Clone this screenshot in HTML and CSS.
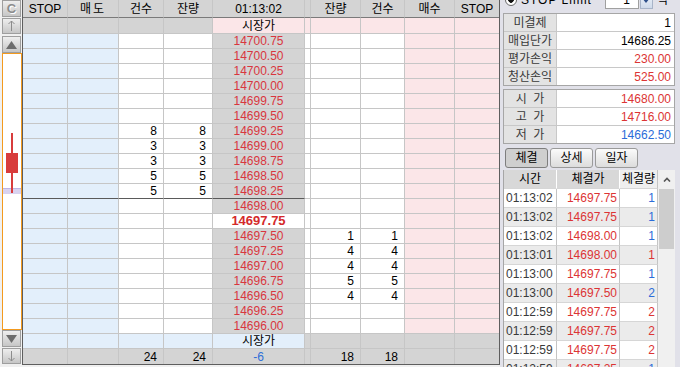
FILE: index.html
```html
<html>
  <head>
    <link rel="stylesheet" href="styles.css">
    <title>주문 호가</title>
  </head>
  <body>
    <div class="screen">
      <div class="side">
        <div class="side-btn letter">C</div>
        <div class="side-btn arrow">
          <svg width="9" height="12" viewBox="0 0 9 12"><path d="M4.5 1 V11 M1.5 4 L4.5 1 L7.5 4" fill="none" stroke="#8c8c8c" stroke-width="1"/></svg>
        </div>
        <div class="side-btn tri">
          <svg width="11" height="8" viewBox="0 0 11 8"><path d="M5.5 0 L11 8 H0 Z" fill="#6c6c6c"/></svg>
        </div>
        <div class="chart">
          <div class="range"></div>
          <div class="wick"></div>
          <div class="candle"></div>
        </div>
        <div class="side-btn tri">
          <svg width="11" height="8" viewBox="0 0 11 8"><path d="M0 0 H11 L5.5 8 Z" fill="#6c6c6c"/></svg>
        </div>
        <div class="side-btn arrow">
          <svg width="9" height="12" viewBox="0 0 9 12"><path d="M4.5 1 V11 M1.5 8 L4.5 11 L7.5 8" fill="none" stroke="#8c8c8c" stroke-width="1"/></svg>
        </div>
      </div>

      <div class="ladder" id="ladder">
        <div class="cell hd">STOP</div>
        <div class="cell hd wide">매도</div>
        <div class="cell hd">건수</div>
        <div class="cell hd">잔량</div>
        <div class="cell hd">01:13:02</div>
        <div class="cell hd"></div>
        <div class="cell hd">잔량</div>
        <div class="cell hd">건수</div>
        <div class="cell hd">매수</div>
        <div class="cell hd">STOP</div>
      </div>

      <div class="panel">
        <div class="opt">
          <div class="opt-row">
            <span class="radio"></span>
            <span class="opt-label">STOP Limit</span>
            <span class="spin">
              <span class="spin-val">1</span>
              <span class="spin-btn">
                <svg width="8" height="5" viewBox="0 0 8 5"><path d="M0 0 H8 L4 5 Z" fill="#2d4f8a"/></svg>
              </span>
            </span>
            <span class="tick">틱</span>
          </div>
        </div>

        <div class="info">
          <div class="info-row"><div class="info-key">미결제</div><div class="info-val">1</div></div>
          <div class="info-row"><div class="info-key">매입단가</div><div class="info-val">14686.25</div></div>
          <div class="info-row"><div class="info-key">평가손익</div><div class="info-val up">230.00</div></div>
          <div class="info-row"><div class="info-key">청산손익</div><div class="info-val up">525.00</div></div>
        </div>

        <div class="info second">
          <div class="info-row"><div class="info-key">시&nbsp;&nbsp;가</div><div class="info-val up">14680.00</div></div>
          <div class="info-row"><div class="info-key">고&nbsp;&nbsp;가</div><div class="info-val up">14716.00</div></div>
          <div class="info-row"><div class="info-key">저&nbsp;&nbsp;가</div><div class="info-val down">14662.50</div></div>
        </div>

        <div class="tabs">
          <div class="tab on">체결</div>
          <div class="tab">상세</div>
          <div class="tab">일자</div>
        </div>

        <div class="trades">
          <div class="trade-list" id="trade-list">
            <div class="tc th">시간</div>
            <div class="tc th">체결가</div>
            <div class="tc th light">체결량</div>
          </div>
          <div class="scroll">
            <div class="scroll-up">
              <svg width="8" height="5" viewBox="0 0 8 5"><path d="M1 4.5 L4 1.5 L7 4.5" fill="none" stroke="#555" stroke-width="1.6"/></svg>
            </div>
            <div class="thumb"></div>
          </div>
        </div>
      </div>
    </div>

    <script>
      const ladder = document.getElementById("ladder");
      const tradeList = document.getElementById("trade-list");

      const sells = { "14699.25": 8, "14699.00": 3, "14698.75": 3, "14698.50": 5, "14698.25": 5 };
      const buys = { "14697.50": 1, "14697.25": 4, "14697.00": 4, "14696.75": 5, "14696.50": 4 };
      const current = "14697.75";

      function addCell(cls, text) {
        let div = document.createElement("div");
        div.className = "cell " + cls;
        if (text !== undefined) div.textContent = text;
        ladder.appendChild(div);
      }

      // 시장가 (top)
      addCell("g"); addCell("g"); addCell("g"); addCell("g");
      addCell("p", "시장가");
      addCell("p"); addCell("p"); addCell("p"); addCell("p"); addCell("p");

      for (let i = 0; i < 20; i++) {
        let price = (14700.75 - i * 0.25).toFixed(2);
        let mark = price === "14698.25" ? " mark" : "";
        let s = sells[price] || "";
        let b = buys[price] || "";
        addCell("b" + mark);
        addCell("b" + mark);
        addCell("w num" + mark, s);
        addCell("w num" + mark, s);
        addCell((price === current ? "cur" : "px") + mark, price);
        addCell("w");
        addCell("w num", b);
        addCell("w num", b);
        addCell("p");
        addCell("p");
      }

      // 시장가 (bottom)
      addCell("b"); addCell("b"); addCell("b"); addCell("b");
      addCell("b", "시장가");
      addCell("g"); addCell("g"); addCell("g"); addCell("g"); addCell("g");

      // totals
      addCell("g last"); addCell("g last");
      addCell("g num last", "24"); addCell("g num last", "24");
      addCell("g diff last", "-6");
      addCell("g last");
      addCell("g num last", "18"); addCell("g num last", "18");
      addCell("g last"); addCell("g last");

      const trades = [
        ["01:13:02", "14697.75", 1, "down"],
        ["01:13:02", "14697.75", 1, "down"],
        ["01:13:02", "14698.00", 1, "down"],
        ["01:13:01", "14698.00", 1, "up"],
        ["01:13:00", "14697.75", 1, "down"],
        ["01:13:00", "14697.50", 2, "down"],
        ["01:12:59", "14697.75", 2, "up"],
        ["01:12:59", "14697.75", 2, "up"],
        ["01:12:59", "14697.75", 2, "up"],
        ["01:12:59", "14697.25", 1, "down"]
      ];

      trades.forEach((t, i) => {
        let zebra = i % 2 ? " odd" : "";
        let time = document.createElement("div");
        time.className = "tc time" + zebra;
        time.textContent = t[0];
        let price = document.createElement("div");
        price.className = "tc amt up" + zebra;
        price.textContent = t[1];
        let vol = document.createElement("div");
        vol.className = "tc amt " + t[3] + zebra;
        vol.textContent = t[2];
        tradeList.appendChild(time);
        tradeList.appendChild(price);
        tradeList.appendChild(vol);
      });
    </script>
  </body>
</html>
```

FILE: styles.css
```css
body {
  margin: 0;
  background: #f0f0f0;
  font-family: "Liberation Sans", "Noto Sans CJK KR", sans-serif;
  font-size: 12px;
  line-height: 14px;
  color: #000;
  overflow: hidden;
}

.screen {
  display: flex;
  width: 680px;
  height: 367px;
}

/* left strip */

.side {
  width: 22px;
  flex: none;
  padding-left: 2px;
  box-sizing: border-box;
  display: flex;
  flex-direction: column;
}

.side-btn {
  width: 19px;
  height: 17px;
  flex: none;
  box-sizing: border-box;
  border: 1px solid #9e9e9e;
  background: linear-gradient(#eeeeee, #c6c6c6);
  display: flex;
  align-items: center;
  justify-content: center;
  color: #8c8c8c;
  margin-bottom: 1px;
}

.side-btn.letter {
  font-weight: bold;
  font-size: 13px;
  text-shadow: 1px 1px 0 #fff;
}

.side-btn.arrow {
  height: 16px;
}

.side-btn.tri:nth-child(3) {
  margin-top: 1px;
  margin-bottom: 0;
}

.chart {
  position: relative;
  width: 20px;
  height: 277px;
  flex: none;
  box-sizing: border-box;
  border: 1px solid #f39a1e;
  background: #fff;
}

.range {
  position: absolute;
  left: 0;
  right: 0;
  top: 134px;
  height: 5px;
  background: #d9d3f0;
  border-top: 1px solid #bdb4e4;
}

.wick {
  position: absolute;
  left: 8px;
  top: 79px;
  width: 2px;
  height: 60px;
  background: #d83c3c;
}

.candle {
  position: absolute;
  left: 3px;
  top: 99px;
  width: 12px;
  height: 20px;
  background: #d83c3c;
}

/* order ladder */

.ladder {
  flex: none;
  align-self: flex-start;
  display: grid;
  grid-template-columns: 45px 51px 45px 49px 92px 6px 50px 44px 50px 44px;
  grid-template-rows: 18px 16px repeat(22, 15px);
  border-left: 1px solid #5e5e5e;
  border-right: 1px solid #5e5e5e;
  border-bottom: 1px solid #5e5e5e;
}

.cell {
  box-sizing: border-box;
  border-right: 1px solid #c6c6c6;
  border-bottom: 1px solid #c6c6c6;
  display: flex;
  align-items: center;
  justify-content: center;
  white-space: nowrap;
  overflow: hidden;
}

.cell:nth-child(10n) {
  border-right: none;
}

.hd {
  background: #d4d4d4;
  border-bottom-color: #7a7a7a;
  padding-top: 1px;
}

.hd.wide {
  letter-spacing: 2px;
}

.g { background: #d4d4d4; }
.b { background: #e3effb; }
.w { background: #fff; }
.p { background: #fbe6e8; }

.num {
  justify-content: flex-end;
  padding-right: 6px;
}

.px {
  background: #d4d4d4;
  color: #d9363e;
}

.cur {
  background: #fff;
  color: #d42a2a;
  font-weight: bold;
  font-size: 13px;
}

.mark {
  border-bottom-color: #5a5a5a;
}

.diff {
  color: #2f6fd8;
}

.last {
  border-bottom: none;
}

/* right panel */

.panel {
  flex: 1;
  background: #e1e1e9;
  padding-left: 3px;
}

.opt {
  height: 13px;
  overflow: hidden;
}

.opt-row {
  display: flex;
  align-items: center;
  height: 20px;
  margin-top: -10px;
}

.radio {
  width: 10px;
  height: 10px;
  margin-left: 2px;
  border: 1px solid #6a6a6a;
  border-radius: 50%;
  background: radial-gradient(#111 0 2.5px, #fff 3px);
}

.opt-label {
  margin-left: 4px;
  letter-spacing: 1px;
}

.spin {
  display: flex;
  margin-left: auto;
  height: 18px;
}

.spin-val {
  width: 34px;
  box-sizing: border-box;
  background: #fff;
  border: 1px solid #a0a0a0;
  text-align: right;
  padding-right: 8px;
  line-height: 16px;
}

.spin-btn {
  width: 13px;
  margin-left: 1px;
  box-sizing: border-box;
  border: 1px solid #a8b4c8;
  background: linear-gradient(#f2f6fc, #cfdaea);
  display: flex;
  align-items: center;
  justify-content: center;
}

.tick {
  margin: 0 12px 0 4px;
}

.info {
  width: 172px;
  box-sizing: border-box;
  border: 1px solid #a6a6a6;
  background: #fff;
}

.info.second {
  margin-top: 3px;
}

.info-row {
  display: flex;
  height: 18px;
  box-sizing: border-box;
  border-top: 1px solid #c8c8c8;
}

.info-row:first-child {
  border-top: none;
  height: 17px;
}

.info-key {
  width: 53px;
  box-sizing: border-box;
  border-right: 1px solid #c8c8c8;
  background: #e3e3e3;
  color: #3a3a3a;
  display: flex;
  align-items: center;
  justify-content: center;
}

.info-val {
  flex: 1;
  display: flex;
  align-items: center;
  justify-content: flex-end;
  padding-right: 3px;
}

.up { color: #dc3434; }
.down { color: #2b6cd9; }

.tabs {
  display: flex;
  gap: 2px;
  margin: 4px 0 2px 2px;
}

.tab {
  width: 43px;
  height: 20px;
  box-sizing: border-box;
  border: 1px solid #9a9a9a;
  border-radius: 3px;
  background: linear-gradient(#fbfbfb, #dcdcdc);
  display: flex;
  align-items: center;
  justify-content: center;
}

.tab.on {
  background: #cfcfcf;
  border-color: #7e7e7e;
}

.trades {
  display: flex;
  width: 172px;
  height: 200px;
  box-sizing: border-box;
  border-left: 1px solid #a6a6a6;
  background: #fff;
}

.trade-list {
  display: grid;
  grid-template-columns: 53px 63px 38px;
  grid-auto-rows: 19px;
  align-content: start;
}

.tc {
  box-sizing: border-box;
  border-right: 1px solid #c4c4c4;
  border-bottom: 1px solid #d6d6d6;
  display: flex;
  align-items: center;
  white-space: nowrap;
  background: #fff;
}

.tc.odd {
  background: #ebebeb;
}

.th {
  justify-content: center;
  background: #d8d8d8;
  border-right-color: #fff;
}

.th.light {
  background: #efefef;
  border-right-color: #c4c4c4;
}

.time {
  color: #3a3a3a;
  padding-left: 2px;
}

.amt {
  justify-content: flex-end;
  padding-right: 2px;
}

.scroll {
  width: 17px;
  background: #f0f0f0;
}

.scroll-up {
  height: 19px;
  display: flex;
  align-items: center;
  justify-content: center;
}

.thumb {
  height: 60px;
  margin: 0 1px;
  background: #cdcdcd;
}
```
